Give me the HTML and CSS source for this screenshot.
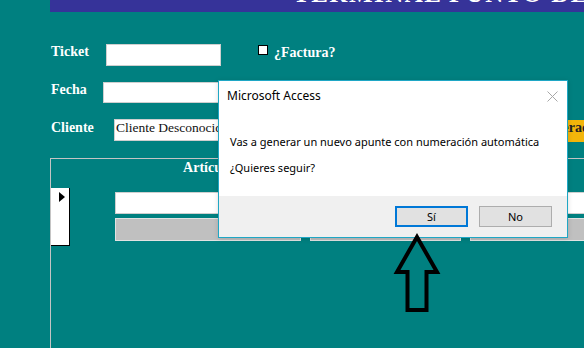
FILE: index.html
```html
<!DOCTYPE html>
<html lang="es">
<head>
<meta charset="utf-8">
<title>Terminal punto de venta</title>
<link rel="stylesheet" href="styles.css">
</head>
<body>
<div class="banner"><div class="banner-title">TERMINAL PUNTO DE VENTA</div></div>
<main class="form">
  <div class="row row-ticket">
    <span class="lbl lbl-ticket">Ticket</span>
    <div class="field f-ticket"></div>
    <span class="check"></span>
    <span class="lbl lbl-factura">¿Factura?</span>
  </div>
  <div class="row row-fecha">
    <span class="lbl lbl-fecha">Fecha</span>
    <div class="field f-fecha"></div>
  </div>
  <div class="row row-cliente">
    <span class="lbl lbl-cliente">Cliente</span>
    <div class="field combo">Cliente Desconocido</div>
    <div class="btn-yellow">Numeración</div>
  </div>
  <section class="sub">
    <div class="sub-head">
      <span class="col-title">Artículo</span>
      <span class="col-title"></span>
      <span class="col-title"></span>
    </div>
    <div class="sub-rec">
      <div class="selector"><span class="tri"></span></div>
      <div class="cells">
        <div class="cell-white"></div>
        <div class="cell-white"></div>
        <div class="cell-white"></div>
        <div class="cell-grey"></div>
        <div class="cell-grey"></div>
        <div class="cell-grey"></div>
      </div>
    </div>
  </section>
</main>

<div class="dialog">
  <div class="dlg-title">Microsoft Access
    <svg class="dlg-close" width="11" height="11" viewBox="0 0 11 11"><path d="M0.5 0.5 L10.5 10.5 M10.5 0.5 L0.5 10.5" stroke="#a8a8a8" stroke-width="1" fill="none"/></svg>
  </div>
  <div class="dlg-body">
    <p>Vas a generar un nuevo apunte con numeración automática</p>
    <p>¿Quieres seguir?</p>
  </div>
  <div class="dlg-foot">
    <div class="btn btn-default">Sí</div>
    <div class="btn">No</div>
  </div>
</div>

<svg class="arrow" width="52" height="88" viewBox="0 0 52 88">
  <polygon points="27,9 7,44 17.5,44 17.5,82 36.5,82 36.5,44 47,44" fill="none" stroke="#000" stroke-width="4" stroke-linejoin="miter"/>
</svg>
</body>
</html>
```

FILE: styles.css
```css
* { box-sizing: border-box; }
html, body { margin: 0; padding: 0; }
body {
  width: 584px;
  height: 348px;
  overflow: hidden;
  position: relative;
  background: #008080;
  font-family: "Liberation Serif", serif;
}

.banner {
  margin-left: 50px;
  height: 12px;
  background: #363399;
  overflow: hidden;
  padding-left: 243px;
}
.banner-title {
  color: #fff;
  font-weight: bold;
  font-size: 25px;
  line-height: 25px;
  white-space: nowrap;
  margin-top: -19.5px;
  letter-spacing: 1.5px;
}

.form { padding-top: 32px; }

.row {
  display: flex;
  align-items: flex-start;
  padding-left: 51px;
  margin-bottom: 16px;
}
.row > * { flex-shrink: 0; }
.row-ticket { height: 22px; }
.row-fecha { height: 21px; }
.row-cliente { height: 22px; margin-bottom: 17px; }

.lbl {
  color: #fff;
  font-weight: bold;
  font-size: 14px;
  line-height: 16px;
}
.lbl-ticket { width: 55px; }
.lbl-fecha { width: 52px; }
.lbl-cliente { width: 63px; padding-top: 1px; }
.lbl-factura { margin-top: 1px; }

.field {
  height: 100%;
  background: #fff;
  border: 1px solid #cfcfcf;
}
.f-ticket { width: 115px; }
.f-fecha { width: 300px; }
.check {
  width: 10px;
  height: 10px;
  margin: 1px 6px 0 37px;
  background: #fff;
  border: 1px solid #000;
}
.combo {
  width: 386px;
  padding-left: 1px;
  font-size: 13.5px;
  line-height: 15px;
  color: #111;
  white-space: nowrap;
}
.btn-yellow {
  width: 130px;
  height: 22px;
  margin: 1px 0 0 10px;
  padding-left: 23px;
  background: #f3b50a;
  color: #222;
  font-weight: bold;
  font-size: 14px;
  line-height: 15px;
}

.sub {
  margin-left: 50px;
  width: 620px;
  height: 200px;
  border: 1px solid #c4c4c4;
}
.sub-head {
  display: grid;
  grid-template-columns: 186px 151px 150px;
  column-gap: 9px;
  padding: 1px 0 0 64px;
  height: 29px;
}
.col-title {
  color: #fff;
  font-weight: bold;
  font-size: 14px;
  line-height: 16px;
  text-align: center;
}
.sub-rec { display: flex; align-items: flex-start; }
.selector {
  width: 19px;
  height: 58px;
  flex-shrink: 0;
  background: #fff;
  border-right: 1px solid #000;
  border-bottom: 1px solid #000;
  padding: 4px 0 0 8px;
}
.tri {
  display: block;
  width: 0;
  height: 0;
  border-left: 6px solid #000;
  border-top: 5px solid transparent;
  border-bottom: 5px solid transparent;
}
.cells {
  margin-left: 45px;
  padding-top: 4px;
  display: grid;
  grid-template-columns: 186px 151px 150px;
  column-gap: 9px;
  row-gap: 4px;
}
.cell-white { height: 22px; background: #fff; border: 1px solid #cfcfcf; }
.cell-grey { height: 23px; background: #c0c0c0; border: 1px solid #e2e2e2; }

.dialog {
  position: absolute;
  left: 218px;
  top: 80px;
  width: 350px;
  height: 158px;
  background: #fff;
  border: 1px solid #1fa7c5;
  display: flex;
  flex-direction: column;
  font-family: "Noto Sans", sans-serif;
  font-size: 11px;
  color: #000;
  box-shadow: 0 1px 5px rgba(0, 0, 0, 0.15);
}
.dlg-title {
  position: relative;
  height: 30px;
  line-height: 30px;
  padding-left: 8px;
  font-size: 12px;
}
.dlg-close { position: absolute; right: 9px; top: 10px; }
.dlg-body { flex: 1; padding: 23px 11px 0; }
.dlg-body p { margin: 0; line-height: 16px; }
.dlg-body p + p { margin-top: 10px; }
.dlg-foot {
  height: 41px;
  background: #f0f0f0;
  display: flex;
  justify-content: flex-end;
  gap: 11px;
  padding: 10px 15px 0 0;
}
.btn {
  width: 73px;
  height: 21px;
  background: #e1e1e1;
  border: 1px solid #adadad;
  display: flex;
  align-items: center;
  justify-content: center;
}
.btn-default { border: 2px solid #0078d7; }

.arrow { position: absolute; left: 390px; top: 228px; }
```
